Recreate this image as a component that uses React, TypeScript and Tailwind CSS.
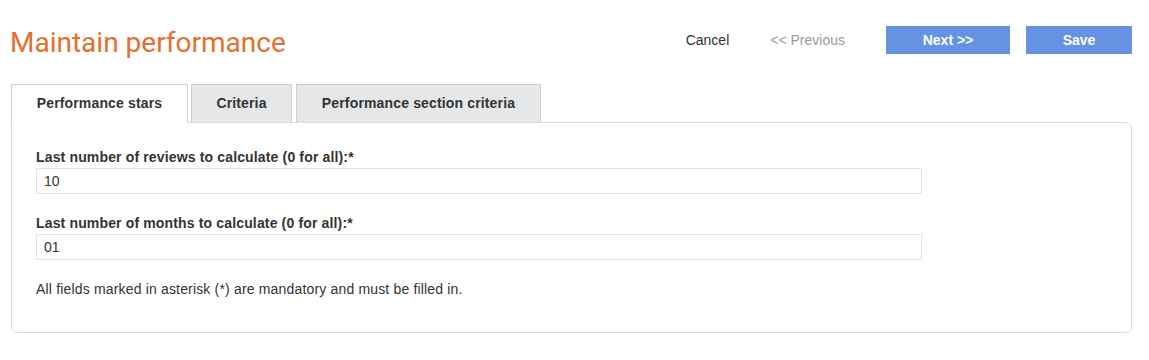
import React from 'react';

const tabs = ['Performance stars', 'Criteria', 'Performance section criteria'];

function Field({ label, value }: { label: string; value: string }) {
  return (
    <div className="flex flex-col">
      <label className="text-[14px] leading-[20px] font-bold tracking-[0.15px] text-[#333] mb-px">{label}</label>
      <input
        readOnly
        value={value}
        className="w-[886px] h-[26px] border border-[#e3e3e3] px-[7px] text-[14px] text-[#333] outline-none"
      />
    </div>
  );
}

export default function App() {
  const active = 0;

  return (
    <div className="min-h-[360px] bg-white pl-[11px] pr-[17px] pt-[26px] font-['Liberation_Sans',Arial,sans-serif] text-[#333]">
      <div className="flex items-center justify-between h-[28px]">
        <h1 className="font-['Roboto',sans-serif] text-[28px] leading-[34px] font-normal text-[#e2702f] -ml-px mt-[5px]">
          Maintain performance
        </h1>
        <div className="flex items-center">
          <button className="text-[14px] text-[#333] mr-[41px]">Cancel</button>
          <button className="text-[14px] text-[#9a9a9a] mr-[41px]">&lt;&lt; Previous</button>
          <button className="w-[124px] h-[28px] bg-[#6592e3] text-white text-[14px] font-bold mr-[16px]">Next &gt;&gt;</button>
          <button className="w-[106px] h-[28px] bg-[#6592e3] text-white text-[14px] font-bold">Save</button>
        </div>
      </div>

      <div className="flex mt-[30px]">
        {tabs.map((t, i) => (
          <div
            key={t}
            className={
              (i === active
                ? 'relative z-10 h-[39px] -mb-px bg-white border border-b-0 border-[#cfcfcf] '
                : 'h-[38px] bg-[#e6e7e9] border border-b-0 border-[#cfcfcf] ') +
              (i === 0 ? 'w-[177px]' : i === 1 ? 'w-[101px] ml-[3px]' : 'w-[245px] ml-[4px]') +
              ' flex items-center justify-center pb-px text-[14px] font-bold tracking-[0.15px] text-[#333]'
            }
          >
            {t}
          </div>
        ))}
      </div>

      <div className="border border-[#dcdcdc] rounded-b-[6px] rounded-tr-[6px] pl-[24px] pt-[24px] pb-[33px] flex flex-col">
        <Field label="Last number of reviews to calculate (0 for all):*" value="10" />
        <div className="mt-[19px]">
          <Field label="Last number of months to calculate (0 for all):*" value="01" />
        </div>
        <p className="mt-[19px] text-[14px] leading-[20px] tracking-[0.17px] text-[#333]">
          All fields marked in asterisk (*) are mandatory and must be filled in.
        </p>
      </div>
    </div>
  );
}
